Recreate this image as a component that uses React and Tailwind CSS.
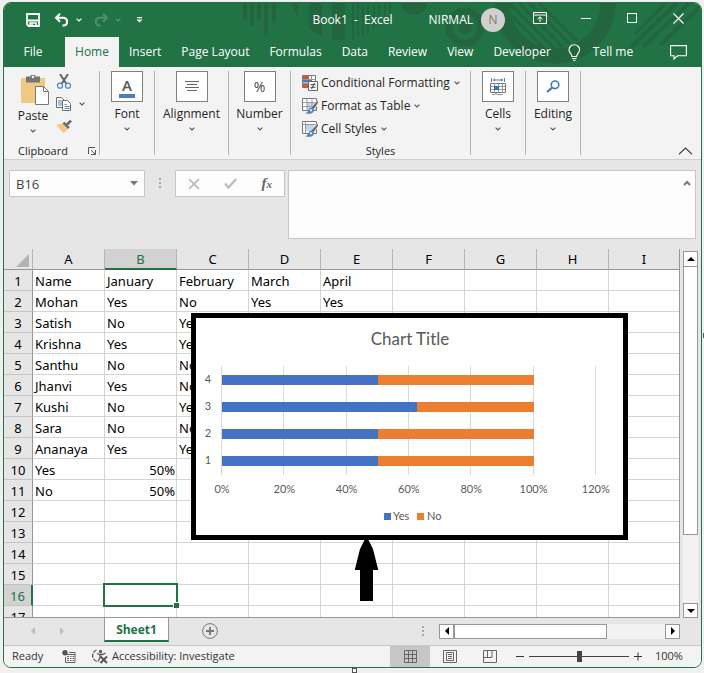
import React from "react";

const UI = "font-['Open_Sans','Noto_Sans',sans-serif]";

function Caret({ className = "" }) {
  return (
    <svg width="6" height="4" viewBox="0 0 6 4" fill="none" stroke="currentColor" strokeWidth="1.1" className={className}>
      <path d="M.6.6L3 2.900 5.400.6" />
    </svg>
  );
}

function TitleArt() {
  return (
    <svg className="absolute top-0 right-0 h-[65px] w-[697px]" viewBox="4 3 697 65" aria-hidden="true">
      <g fill="#23653f">
        <path d="M243 3h4v16h-4zM250 3h4v23h-4zM257 3h4v17h-4zM264 3h4v32h-4zM272 3h4v20h-4z" />
        <path d="M291 3h7v14zM309 3h13v33l-13-7zM332 3h13v37h-13z" />
        <path d="M352 3h2v37h-2zM357 3h2v34h-2zM362 3h2v33h-2zM367 3h2v31h-2zM373 3h2v27h-2zM378 3h2v23h-2zM384 3h2v20h-2zM389 3h2v14h-2z" />
        <path d="M401 3h26a13 12 0 0 1-26 0z" />
      </g>
      <g fill="none" stroke="#23653f">
        <circle cx="465" cy="27" r="16" strokeWidth="7" />
        <path d="M502 3a53 53 0 0 0 106 0" strokeWidth="15" />
        <g strokeWidth="3">
          <path d="M499 3l48 48M509 3l46 46M519 3l44 44M529 3l41 41M539 3l38 38" />
          <path d="M666 3l-31 31" />
          <path d="M677 3l-46 44M689 3l-46 44M700 7l-40 38" strokeWidth="4" />
        </g>
      </g>
      <circle cx="465" cy="27" r="7" fill="#23653f" />
    </svg>
  );
}

function TitleBar() {
  return (
    <div className="relative flex h-[34px] items-center text-white">
      <div className="flex flex-1 items-center">
        <button aria-label="Save" className="ml-[22px]">
          <svg width="14" height="14" viewBox="0 0 14 14" fill="none" stroke="#fff" strokeWidth="1.800">
            <path d="M1 1h12v12H2.500L1 11.500z" />
            <path d="M1 7.500h12" strokeWidth="2" />
            <path d="M4 13v-3h6v3" strokeWidth="1.500" />
            <path d="M6 10.500v2" strokeWidth="1.500" />
          </svg>
        </button>
        <button aria-label="Undo" className="ml-[14px] flex items-center gap-[6px]">
          <svg width="16" height="14" viewBox="0 0 16 14" fill="none" stroke="#fff" strokeWidth="2">
            <path d="M6 .8L2 4.800l4 4M2 4.800h8a4 4 0 0 1 0 7.800H8.500" />
          </svg>
          <Caret />
        </button>
        <button aria-label="Redo" className="ml-[11px] flex items-center gap-[6px] text-[#5b9a78]">
          <svg width="16" height="14" viewBox="0 0 16 14" fill="none" stroke="#4f8f6c" strokeWidth="2">
            <path d="M10 .8l4 4-4 4M14 4.800H6a4 4 0 0 0 0 7.800h1.500" />
          </svg>
          <Caret />
        </button>
        <button aria-label="Customize toolbar" className="ml-[15px]">
          <svg width="7" height="6" viewBox="0 0 7 6" fill="#fff">
            <path d="M1 0h5v1.300H1zM.5 2.500h6L3.500 5.500z" />
          </svg>
        </button>
      </div>
      <div className="text-xs whitespace-pre">Book1  -  Excel</div>
      <div className="flex flex-1 items-center">
        <span className="ml-[36px] text-xs">NIRMAL</span>
        <span className="ml-[8px] flex size-6 shrink-0 items-center justify-center rounded-full bg-[#d2d0ce] text-xs text-[#797775]">N</span>
        <div className="ml-auto flex h-[34px] pb-[4px]">
          <button aria-label="Ribbon display options" className="flex w-[46px] items-center justify-center">
            <svg width="14" height="12" viewBox="0 0 14 12" fill="none" stroke="#fff">
              <path d="M.5.5h13v11H.5zM.5 3h13M7 10V5M4.500 7.200L7 4.800l2.500 2.400" />
            </svg>
          </button>
          <button aria-label="Minimize" className="flex w-[46px] items-center justify-center">
            <span className="h-px w-[10px] bg-white" />
          </button>
          <button aria-label="Maximize" className="flex w-[46px] items-center justify-center">
            <span className="size-[10px] border border-white" />
          </button>
          <button aria-label="Close" className="flex w-[46px] items-center justify-center">
            <svg width="11" height="11" viewBox="0 0 11 11" stroke="#fff" strokeWidth="1.100">
              <path d="M.5.5l10 10M10.500.5l-10 10" />
            </svg>
          </button>
        </div>
      </div>
    </div>
  );
}

const TABS = ["Insert", "Page Layout", "Formulas", "Data", "Review", "View", "Developer"];

function TabBar() {
  return (
    <nav className="relative flex h-[30px] items-stretch text-xs text-white">
      <button className="w-[61px] pr-[3px]">File</button>
      <button className="w-[54px] bg-[#f3f3f3] text-[#217346]">Home</button>
      {TABS.map((t) => (
        <button key={t} className="px-[10px]">{t}</button>
      ))}
      <button className="flex items-center gap-[12px] pl-[7px]">
        <svg width="13" height="17" viewBox="0 0 13 17" fill="none" stroke="#fff" strokeWidth="1.100">
          <path d="M4 12.500C4 10 1 9 1 5.800a5.300 5 0 0 1 10.600 0C11.600 9 8.600 10 8.600 12.500zM4 14.500h4.600M5 16.300h2.600" />
        </svg>
        Tell me
      </button>
      <button aria-label="Comments" className="mr-[14px] ml-auto">
        <svg width="17" height="15" viewBox="0 0 17 15" fill="none" stroke="#fff" strokeWidth="1.100">
          <path d="M.6.6h15.800v10.200H7.500L4 14v-3.200H.6z" />
        </svg>
      </button>
    </nav>
  );
}

function BigButton({ label, width, children }) {
  return (
    <button className={`${width} flex flex-col items-center border-r border-[#b3b3b3] text-xs text-[#262626]`}>
      <span className="flex h-[31px] w-[32px] items-center justify-center border border-[#808080] bg-white">{children}</span>
      <span className="mt-[4px] leading-4">{label}</span>
      <Caret className="mt-[5px] text-[#555]" />
    </button>
  );
}

function StyleRow({ icon, label }) {
  return (
    <button className="flex h-[23px] items-center text-xs text-[#262626]">
      {icon}
      <span className="ml-[3px]">{label}</span>
      <Caret className="ml-[4px] text-[#555]" />
    </button>
  );
}

function CondIcon() {
  return (
    <svg width="16" height="16" viewBox="0 0 16 16" fill="none">
      <path d="M.5.5h13v12H.5z" fill="#fff" stroke="#777" />
      <path d="M9.500 1v4M.5 4.500h13M.5 8.500h6" stroke="#999" />
      <path d="M1 1h6v3H1zM1 9h5v3.500H1z" fill="#d9532c" />
      <path d="M1 5h9v2.500H1z" fill="#4a7fba" />
      <path d="M6.500 6.500h9v9h-9z" fill="#fff" stroke="#666" />
      <path d="M8.500 9.700h5M8.500 12.300h5M12.500 8l-3 6" stroke="#444" />
    </svg>
  );
}

function BrushTableIcon({ plain }) {
  return (
    <svg width="16" height="16" viewBox="0 0 16 16" fill="none">
      <path d="M.5.5h14v12H.5z" fill="#fff" stroke="#777" />
      <path d={plain ? "M4 4h8v6H4z" : "M5 4h9v8H5z"} fill="#c3d5ea" />
      <path d={plain ? "M3.500.5v12M.5 3.500h14" : "M.5 4.500h14M.5 8.500h14M5 .5v12M10 .5v12"} stroke="#9a9a9a" />
      <path d="M16 2l-7 7.500 2.500 2.500 5-7.500z" fill="#666" stroke="#f3f3f3" strokeWidth=".8" />
      <path d="M9.500 9.500c-3 0-2.500 4-6 6 3 .8 8.500.5 8.500-3.500z" fill="#4a86c5" />
      <circle cx="9" cy="12.300" r="1.100" fill="#fff" />
    </svg>
  );
}

function Ribbon() {
  return (
    <section className="flex h-[93px] border-b border-[#cfcfcf] bg-[#f3f3f3] pt-[4px] pb-[4px]">
      <div className="flex w-[96px] flex-col border-r border-[#b3b3b3] text-xs text-[#262626]">
        <div className="flex h-[73px] shrink-0">
          <button className="ml-[13px] flex w-[32px] flex-col items-center pt-[4px]">
            <svg width="28" height="30" viewBox="0 0 28 30" className="ml-[3px] shrink-0">
              <path d="M0 3h24v25H0z" fill="#efc881" />
              <path d="M5 1.500h4.500a2.500 2.500 0 0 1 5 0H19v6H5z" fill="#757575" />
              <circle cx="12" cy="2" r="1.300" fill="#f3f3f3" />
              <path d="M14.500 11.500h8l5 5v13h-13z" fill="#fff" stroke="#777" />
              <path d="M22.500 11.500v5h5" fill="none" stroke="#777" />
            </svg>
            <span className="mt-[3px] leading-4">Paste</span>
            <Caret className="mt-[5px] text-[#555]" />
          </button>
          <div className="ml-[7px] flex flex-col items-start gap-[8px] pt-[3px]">
            <button aria-label="Cut">
              <svg width="16" height="15" viewBox="0 0 16 15" fill="none">
                <path d="M4 0l6.500 10M12 0L5.500 10" stroke="#666" strokeWidth="2" />
                <circle cx="4" cy="11.700" r="2.500" stroke="#4a86c5" strokeWidth="1.200" />
                <circle cx="12" cy="11.700" r="2.500" stroke="#4a86c5" strokeWidth="1.200" />
              </svg>
            </button>
            <button aria-label="Copy" className="flex items-center gap-[7px]">
              <svg width="16" height="14" viewBox="0 0 16 14" fill="#fff" stroke="#707070">
                <path d="M.5.5h5l3 3v7h-8z" />
                <path d="M2 4h4M2 6h4M2 8h4" stroke="#4a86c5" />
                <path d="M6.500 3.500h5l3 3v7h-8z" />
                <path d="M8.500 7.500h2M8.500 9.500h5M8.500 11.500h5" stroke="#4a86c5" />
              </svg>
              <Caret className="text-[#555]" />
            </button>
            <button aria-label="Format Painter">
              <svg width="16" height="14" viewBox="0 0 16 14">
                <path d="M0 6l6.500-1.500 5.500 6L7.500 14z" fill="#efc881" />
                <path d="M6.500 4.500l2-1.800 5.300 5.500L12 10z" fill="#6b6b6b" />
                <path d="M10 4.500L14 .7l2 1.800-4 4z" fill="#6b6b6b" />
              </svg>
            </button>
          </div>
        </div>
        <div className="flex items-center justify-between pr-[3px] pl-[14px] text-[11px] leading-[14px]">
          <span>Clipboard</span>
          <button aria-label="Clipboard settings">
            <svg width="8" height="8" viewBox="0 0 8 8" fill="none" stroke="#555">
              <path d="M.5 7V.5H7M3 3l4 4M7.500 3v4.500H3" />
            </svg>
          </button>
        </div>
      </div>
      <BigButton label="Font" width="w-[55px]">
        <span className="border-b-4 border-[#4a7fba] px-[3px] text-[15px] leading-[18px] font-semibold text-[#555]">A</span>
      </BigButton>
      <BigButton label="Alignment" width="w-[74px]">
        <svg width="14" height="11" viewBox="0 0 14 11" stroke="#666">
          <path d="M0 .5h14M2 3.500h10M0 6.500h14M2 9.500h10" />
        </svg>
      </BigButton>
      <BigButton label="Number" width="w-[62px]">
        <span className="text-sm text-[#444]">%</span>
      </BigButton>
      <div className="flex w-[180px] flex-col border-r border-[#b3b3b3] text-xs text-[#262626]">
        <div className="flex h-[73px] shrink-0 flex-col items-start pl-[11px]">
          <StyleRow label="Conditional Formatting" icon={<CondIcon />} />
          <StyleRow label="Format as Table" icon={<BrushTableIcon />} />
          <StyleRow label="Cell Styles" icon={<BrushTableIcon plain />} />
        </div>
        <span className="text-center text-[11px] leading-[14px]">Styles</span>
      </div>
      <BigButton label="Cells" width="w-[55px]">
        <svg width="16" height="17" viewBox="0 0 16 17" fill="none">
          <path d="M1.500 0v4M14.500 0v4M3 2h10" stroke="#4a7fba" />
          <path d="M3 2l2-1.500v3zM13 2l-2-1.500v3z" fill="#4a7fba" />
          <path d="M.5 5.500h15v9H.5z" fill="#fff" stroke="#777" />
          <path d="M1 8.500h14M1 11.500h14M4.500 5.500v9M8.500 5.500v9M12.500 5.500v9M2 16.500h3l1-2 1 2h6" stroke="#999" />
          <path d="M4 8h5v4H4z" fill="#2f74bd" />
        </svg>
      </BigButton>
      <BigButton label="Editing" width="w-[55px]">
        <svg width="14" height="13" viewBox="0 0 14 13" fill="none" stroke="#3f7cbf">
          <circle cx="9" cy="4.800" r="3.800" strokeWidth="1.600" />
          <path d="M6.200 7.600L1 12" strokeWidth="2.200" />
        </svg>
      </BigButton>
      <button aria-label="Collapse ribbon" className="mr-[8px] ml-auto self-end">
        <svg width="15" height="8" viewBox="0 0 15 8" fill="none" stroke="#444" strokeWidth="1.200">
          <path d="M1 7.300L7.500 1 14 7.300" />
        </svg>
      </button>
    </section>
  );
}

function Dots({ className = "" }) {
  return (
    <span className={`flex flex-col gap-[2px] ${className}`}>
      <span className="size-[2px] bg-[#a8a8a8]" />
      <span className="size-[2px] bg-[#a8a8a8]" />
      <span className="size-[2px] bg-[#a8a8a8]" />
    </span>
  );
}

function FormulaBar() {
  return (
    <section className="flex h-[89px] items-start bg-[#e6e6e6] pt-[10px] pr-[5px] pl-[5px]">
      <div className="flex h-[27px] w-[136px] items-center border border-[#c6c6c6] bg-[#fdfdfd]">
        <input aria-label="Name box" defaultValue="B16" className="w-[110px] bg-transparent pt-[2px] pl-[6px] text-[13px] text-[#444] outline-none" />
        <button aria-label="Name list" className="ml-auto pr-[6px]">
          <svg width="8" height="5" viewBox="0 0 8 5" fill="#777"><path d="M0 0h8L4 4.500z" /></svg>
        </button>
      </div>
      <Dots className="mt-[8px] ml-[14px]" />
      <div className="ml-[14px] flex h-[27px] w-[110px] items-center justify-between border border-[#c6c6c6] bg-[#fdfdfd] px-[12px]">
        <button aria-label="Cancel">
          <svg width="12" height="10" viewBox="0 0 12 10" stroke="#bdbdbd" strokeWidth="1.800"><path d="M1 0l10 10M11 0L1 10" /></svg>
        </button>
        <button aria-label="Enter">
          <svg width="13" height="11" viewBox="0 0 13 11" fill="none" stroke="#bdbdbd" strokeWidth="2.400"><path d="M1 5.500l3.500 4L12 1" /></svg>
        </button>
        <button aria-label="Insert function" className="font-['Liberation_Serif',serif] text-[15px] leading-4 font-bold text-[#666] italic">
          f<span className="text-[11px]">x</span>
        </button>
      </div>
      <div className="ml-[3px] flex h-[69px] flex-1 border border-[#c6c6c6] bg-[#fdfdfd]">
        <textarea aria-label="Formula" className="flex-1 resize-none bg-transparent p-1 text-[13px] outline-none" />
        <button aria-label="Collapse formula bar" className="mt-[9px] mr-[4px] self-start">
          <svg width="8" height="6" viewBox="0 0 8 6" fill="none" stroke="#777" strokeWidth="2"><path d="M1 5l3-3 3 3" /></svg>
        </button>
      </div>
    </section>
  );
}

const COLS = ["A", "B", "C", "D", "E", "F", "G", "H", "I"];
const ROWS = [
  ["Name", "January", "February", "March", "April"],
  ["Mohan", "Yes", "No", "Yes", "Yes"],
  ["Satish", "No", "Yes"],
  ["Krishna", "Yes", "Yes"],
  ["Santhu", "No", "No"],
  ["Jhanvi", "Yes", "No"],
  ["Kushi", "No", "Yes"],
  ["Sara", "No", "No"],
  ["Ananaya", "Yes", "Yes"],
  ["Yes", "50%"],
  ["No", "50%"],
  [], [], [], [], [], [],
];

const TICKS = [0, 20, 40, 60, 80, 100, 120];
const BARS = [
  { name: "4", yes: 50 },
  { name: "3", yes: 62.5 },
  { name: "2", yes: 50 },
  { name: "1", yes: 50 },
];

function Chart() {
  const px = (v) => 26 + v * 3.115;
  return (
    <figure className="absolute top-[64px] left-[187px] h-[227px] w-[437px] border-[5px] border-black bg-white">
      <svg width="427" height="217" viewBox="0 0 427 217" className="font-['Lato',sans-serif]" fill="#595959">
        <text x="214" y="27" fontSize="17" textAnchor="middle">Chart Title</text>
        {TICKS.map((t) => (
          <g key={t}>
            <path d={`M${Math.round(px(t)) - 0.5} 48v109`} stroke="#d9d9d9" />
            <text x={px(t)} y="175" fontSize="11" textAnchor="middle">{t}%</text>
          </g>
        ))}
        {BARS.map((b, i) => (
          <g key={b.name}>
            <text x="12" y={65 + i * 27} fontSize="11" textAnchor="middle">{b.name}</text>
            <rect x="26" y={57 + i * 27} width={b.yes * 3.12} height="10" fill="#4472c4" />
            <rect x={26 + b.yes * 3.12} y={57 + i * 27} width={(100 - b.yes) * 3.12} height="10" fill="#ed7d31" />
          </g>
        ))}
        <rect x="188" y="195" width="7" height="7" fill="#4472c4" />
        <text x="197" y="202" fontSize="11">Yes</text>
        <rect x="221" y="195" width="7" height="7" fill="#ed7d31" />
        <text x="231" y="202" fontSize="11">No</text>
      </svg>
    </figure>
  );
}

function Sheet() {
  return (
    <div className="relative min-w-0 flex-1 overflow-hidden border-r border-b border-[#979797] bg-white">
      <table className="w-full table-fixed border-separate border-spacing-0 font-['Noto_Sans',sans-serif] text-[13px] text-black">
        <thead>
          <tr className="h-[21px]">
            <th className="w-[29px] border-r border-b border-r-[#b5b5b5] border-b-[#979797] bg-[#e6e6e6] p-0">
              <svg width="13" height="13" viewBox="0 0 13 13" className="mt-[3px] ml-[12px]" fill="#b3b3b3"><path d="M13 0v13H0z" /></svg>
            </th>
            {COLS.map((c, i) => (
              <th
                key={c}
                scope="col"
                className={`px-0 pt-[2px] pb-0 align-top leading-[17px] font-normal ${i < 8 ? "w-[72px] border-r border-r-[#b5b5b5]" : ""} ${
                  c === "B" ? "border-b-2 border-b-[#217346] bg-[#d2d2d2] text-[#217346]" : "border-b border-b-[#979797] bg-[#e6e6e6]"
                }`}
              >
                {c}
              </th>
            ))}
          </tr>
        </thead>
        <tbody>
          {ROWS.map((r, n) => (
            <tr key={n} className="h-[21px]">
              <th
                scope="row"
                className={`border-b border-b-[#c4c4c4] px-0 pt-[2px] pb-0 leading-[18px] font-normal ${
                  n === 15 ? "border-r-2 border-r-[#217346] bg-[#d2d2d2] text-[#217346]" : "border-r border-r-[#979797] bg-[#e6e6e6]"
                }`}
              >
                {n + 1}
              </th>
              {COLS.map((c, i) => (
                <td
                  key={c}
                  className={`border-b border-[#d4d4d4] pt-[2px] pr-px pb-0 pl-[2px] leading-[18px] whitespace-nowrap ${i < 8 ? "border-r" : ""} ${
                    (r[i] || "").endsWith("%") ? "text-right" : ""
                  } ${n === 15 && i === 1 ? "relative" : ""}`}
                >
                  {r[i]}
                  {n === 15 && i === 1 && (
                    <span className="absolute -top-[2px] -left-[2px] h-[24px] w-[75px] border-2 border-[#217346]">
                      <span className="absolute -right-[3px] -bottom-[3px] size-[6px] border-t border-l border-white bg-[#217346]" />
                    </span>
                  )}
                </td>
              ))}
            </tr>
          ))}
        </tbody>
      </table>
      <Chart />
      <svg className="absolute top-[290px] left-[351px]" width="24" height="64" viewBox="0 0 24 64">
        <path d="M10 0h3l5 10 5 20v1h-5v31H5V31H0v-1l5-20z" />
      </svg>
    </div>
  );
}

function VScroll() {
  return (
    <div className="mt-[2px] mr-[3px] ml-[3px] flex w-[15px] flex-col bg-[#f2f2f2]">
      <button aria-label="Scroll up" className="flex h-[16px] items-center justify-center border border-[#979797] bg-white">
        <svg width="8" height="4" viewBox="0 0 8 4"><path d="M0 4h8L4 0z" /></svg>
      </button>
      <div className="-mt-px h-[269px] border border-[#979797] bg-white" />
      <button aria-label="Scroll down" className="mt-auto flex h-[15px] items-center justify-center border border-[#979797] bg-white">
        <svg width="8" height="4" viewBox="0 0 8 4"><path d="M0 0h8L4 4z" /></svg>
      </button>
    </div>
  );
}

function SheetTabs() {
  return (
    <div className="flex h-[27px] items-center bg-[#e6e6e6] pb-px">
      <button aria-label="Previous sheet" className="ml-[27px]">
        <svg width="4" height="8" viewBox="0 0 4 8" fill="#bdbdbd"><path d="M4 0v8L0 4z" /></svg>
      </button>
      <button aria-label="Next sheet" className="ml-[25px]">
        <svg width="4" height="8" viewBox="0 0 4 8" fill="#bdbdbd"><path d="M0 0v8l4-4z" /></svg>
      </button>
      <button className="-mt-px ml-[40px] h-[25px] w-[65px] self-start border-r border-b-2 border-l border-r-[#979797] border-b-[#217346] border-l-[#979797] bg-white pt-[2px] text-xs font-bold text-[#217346]">
        Sheet1
      </button>
      <button aria-label="New sheet" className="ml-[33px]">
        <svg width="16" height="16" viewBox="0 0 16 16" fill="none" stroke="#777">
          <circle cx="8" cy="8" r="7.400" />
          <path d="M8 4v8M4 8h8" strokeWidth="1.800" />
        </svg>
      </button>
      <Dots className="ml-auto" />
      <div className="mr-[21px] ml-[15px] flex h-[15px] w-[241px] bg-[#f2f2f2]">
        <button aria-label="Scroll left" className="flex w-[15px] items-center justify-center border border-[#979797] bg-white">
          <svg width="4" height="8" viewBox="0 0 4 8"><path d="M4 0v8L0 4z" /></svg>
        </button>
        <div className="w-[153px] border border-[#979797] bg-white" />
        <button aria-label="Scroll right" className="ml-auto flex w-[15px] items-center justify-center border border-[#979797] bg-white">
          <svg width="4" height="8" viewBox="0 0 4 8"><path d="M0 0v8l4-4z" /></svg>
        </button>
      </div>
    </div>
  );
}

function StatusBar() {
  return (
    <footer className="flex h-[22px] items-center border-t border-[#c6c6c6] bg-[#f3f3f3] text-[11px] text-[#333]">
      <span className="w-[58px] pl-[8px]">Ready</span>
      <button aria-label="Record macro">
        <svg width="14" height="13" viewBox="0 0 14 13" fill="none" stroke="#666">
          <path d="M3.500 7v5.500h9.500V2.500H7M3.500 4.500H13" />
          <path d="M5 6.500h2M8 6.500h1.500M10.500 6.500H12M5 8.500h2M8 8.500h1.500M10.500 8.500H12M5 10.500h2M8 10.500h1.500M10.500 10.500H12" />
          <circle cx="3" cy="2.800" r="2.700" fill="#555" stroke="none" />
        </svg>
      </button>
      <button className="ml-[16px] flex items-center gap-[4px]">
        <svg width="16" height="15" viewBox="0 0 16 15" fill="none" stroke="#555" strokeWidth="1.300">
          <path d="M4.500 1A6 6 0 0 0 5.500 12.500" strokeDasharray="4 1.200" />
          <path d="M5 4.500l2.500 1h3l3-1.500M8 5.500v3l-2 4" />
          <circle cx="8.500" cy="2.500" r="1" />
          <path d="M8.500 7.500l6.500 6.500M15 7.500L8.500 14" strokeWidth="2" />
        </svg>
        Accessibility: Investigate
      </button>
      <div className="ml-auto flex h-full items-center">
        <button aria-label="Normal view" className="flex h-full w-[40px] items-center justify-center bg-[#c6c6c6]">
          <svg width="13" height="13" viewBox="0 0 13 13" fill="none" stroke="#666"><path d="M.5.5h12v12H.5zM4.500.5v12M8.500.5v12M.5 4.500h12M.5 8.500h12" /></svg>
        </button>
        <button aria-label="Page layout view" className="flex h-full w-[40px] items-center justify-center">
          <svg width="14" height="13" viewBox="0 0 14 13" fill="none" stroke="#666"><path d="M.5.5h13v12H.5zM3.500 2.500h7v8h-7zM5 4.500h4M5 6.500h4M5 8.500h4" /></svg>
        </button>
        <button aria-label="Page break view" className="flex h-full w-[40px] items-center justify-center">
          <svg width="14" height="13" viewBox="0 0 14 13" fill="none" stroke="#666"><path d="M.5.5h13v12H.5zM4.500.5v7M9 .5v7M.5 7.500H9" /></svg>
        </button>
        <button aria-label="Zoom out" className="ml-[6px] flex w-[8px]"><span className="h-px w-full bg-[#333]" /></button>
        <input
          type="range"
          aria-label="Zoom"
          min="0"
          max="100"
          defaultValue="50"
          className="mx-[5px] h-[11px] w-[100px] appearance-none bg-[linear-gradient(#444,#444)] bg-[length:100%_1px] bg-center bg-no-repeat [&::-webkit-slider-thumb]:h-[11px] [&::-webkit-slider-thumb]:w-[5px] [&::-webkit-slider-thumb]:appearance-none [&::-webkit-slider-thumb]:bg-[#444]"
        />
        <button aria-label="Zoom in">
          <svg width="8" height="9" viewBox="0 0 8 9" stroke="#333"><path d="M0 4.500h8M4 .5v8" /></svg>
        </button>
        <span className="w-[59px] pl-[13px]">100%</span>
      </div>
    </footer>
  );
}

export default function App() {
  return (
    <div className={`relative flex h-screen flex-col bg-[#f0f0f0] pt-[2px] pr-[2px] pb-[5px] pl-[3px] ${UI}`}>
      <main className="flex min-h-0 flex-1 flex-col overflow-hidden rounded-lg border border-[#217346] bg-[#e6e6e6]">
        <header className="relative bg-[#217346]">
          <TitleArt />
          <TitleBar />
          <TabBar />
        </header>
        <Ribbon />
        <FormulaBar />
        <div className="flex min-h-0 flex-1">
          <Sheet />
          <VScroll />
        </div>
        <SheetTabs />
        <StatusBar />
      </main>
      <span className="absolute bottom-0 left-[50%] size-[5px] border border-[#555] bg-white" />
      <span className="absolute top-[333px] right-0 h-[5px] w-px bg-[#555]" />
    </div>
  );
}
